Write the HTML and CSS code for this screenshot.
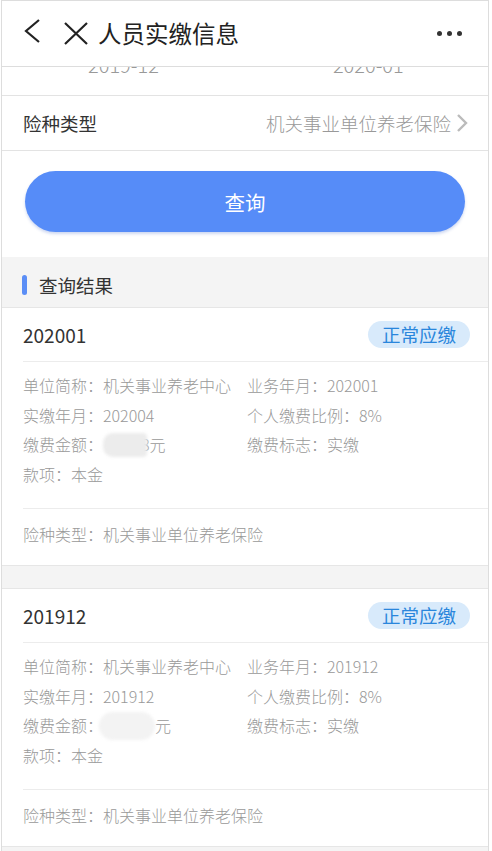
FILE: index.html
```html
<!DOCTYPE html>
<html>
<head>
    <meta charset="utf-8">
    <title>人员实缴信息</title>
    <link rel="stylesheet" href="styles.css">
</head>
<body>
    <div class="screen">
        <div class="nav">
            <svg class="nav-icon" width="30" height="30" viewBox="0 0 30 30">
                <path d="M16 2 L3 13 L16 24" fill="none" stroke="#222" stroke-width="2.2"/>
            </svg>
            <svg class="nav-icon close" width="26" height="26" viewBox="0 0 26 26">
                <path d="M2 2 L24 23 M24 2 L2 23" fill="none" stroke="#222" stroke-width="2.2"/>
            </svg>
            <span class="nav-title">人员实缴信息</span>
            <span class="nav-more"><i></i><i></i><i></i></span>
        </div>

        <div class="date-row">
            <div class="date-inner">
                <span class="date-from">2019-12</span>
                <span class="date-to">2020-01</span>
            </div>
        </div>

        <div class="field-row">
            <span class="field-label">险种类型</span>
            <span class="field-value">机关事业单位养老保险</span>
            <svg class="chevron" width="12" height="20" viewBox="0 0 12 20">
                <path d="M2 2 L10 10 L2 18" fill="none" stroke="#bbb" stroke-width="2.4"/>
            </svg>
        </div>

        <div class="btn-wrap">
            <button type="button" class="query-btn">查询</button>
        </div>

        <div class="section-head">
            <span class="bar"></span>
            <span>查询结果</span>
        </div>

        <div class="card">
            <div class="card-head">
                <span class="card-month">202001</span>
                <span class="badge">正常应缴</span>
            </div>
            <div class="card-body">
                <span>单位简称：机关事业养老中心</span>
                <span>业务年月：202001</span>
                <span>实缴年月：202004</span>
                <span>个人缴费比例：8%</span>
                <span>缴费金额：<i class="blur"></i>8元</span>
                <span>缴费标志：实缴</span>
                <span>款项：本金</span>
            </div>
            <div class="card-foot">险种类型：机关事业单位养老保险</div>
        </div>

        <div class="gap"></div>

        <div class="card">
            <div class="card-head">
                <span class="card-month">201912</span>
                <span class="badge">正常应缴</span>
            </div>
            <div class="card-body">
                <span>单位简称：机关事业养老中心</span>
                <span>业务年月：201912</span>
                <span>实缴年月：201912</span>
                <span>个人缴费比例：8%</span>
                <span>缴费金额：<i class="blur wide"></i>元</span>
                <span>缴费标志：实缴</span>
                <span>款项：本金</span>
            </div>
            <div class="card-foot">险种类型：机关事业单位养老保险</div>
        </div>

        <div class="gap"></div>
    </div>
</body>
</html>
```

FILE: styles.css
```css
body {
    margin: 0;
    padding: 0 0 0 1px;
    background-color: #fff;
    font-family: "Noto Sans CJK SC", "Noto Sans", sans-serif;
    overflow: hidden;
}

.screen {
    width: 486px;
    height: 851px;
    border-left: 1px solid #ddd;
    border-right: 1px solid #ddd;
    border-top: 1px solid #ddd;
    background-color: #fff;
    overflow: hidden;
}

.nav {
    display: flex;
    align-items: center;
    height: 65px;
    border-bottom: 1px solid #ddd;
    color: #222;
}

.nav-icon {
    margin-left: 21px;
    margin-top: -2px;
}

.nav-icon.close {
    margin-left: 10px;
    margin-top: 0;
}

.nav-title {
    margin-left: 9px;
    font-size: 23.5px;
    line-height: 30px;
    margin-top: -1px;
}

.nav-more {
    margin-left: auto;
    margin-right: 26px;
    display: flex;
    gap: 5px;
}

.nav-more i {
    width: 5px;
    height: 5px;
    border-radius: 50%;
    background-color: #333;
}

.date-row {
    height: 28px;
    overflow: hidden;
    border-bottom: 1px solid #e3e3e3;
}

.date-inner {
    display: flex;
    margin-top: -13px;
    font-size: 20px;
    line-height: 22px;
    font-weight: 300;
    color: #999;
}

.date-from {
    margin-left: 86px;
}

.date-to {
    margin-left: 174px;
}

.field-row {
    display: flex;
    align-items: center;
    height: 54px;
    padding: 0 20px 0 21px;
    border-bottom: 1px solid #e3e3e3;
}

.field-label {
    font-size: 18.5px;
    color: #333;
}

.field-value {
    margin-left: auto;
    font-size: 18.5px;
    font-weight: 300;
    color: #999;
}

.chevron {
    margin-left: 5px;
}

.btn-wrap {
    padding: 20px 23px 25px 23px;
}

.query-btn {
    display: block;
    width: 100%;
    height: 61px;
    border: none;
    border-radius: 31px;
    background-color: #568cf8;
    box-shadow: 0 2px 3px rgba(60, 100, 200, 0.25);
    color: #fff;
    font-family: inherit;
    font-size: 20.5px;
    cursor: pointer;
}

.section-head {
    display: flex;
    align-items: center;
    height: 44px;
    padding: 6px 0 0 20px;
    background-color: #f4f4f4;
    border-bottom: 1px solid #e6e6e6;
    font-size: 18.5px;
    color: #333;
}

.bar {
    width: 5px;
    height: 20px;
    border-radius: 3px;
    background-color: #5b8ef6;
    margin-right: 12px;
}

.card {
    background-color: #fff;
}

.card-head {
    display: flex;
    align-items: center;
    height: 53px;
    margin-left: 21px;
    padding-right: 18px;
    border-bottom: 1px solid #ececec;
}

.card-month {
    font-size: 19px;
    color: #333;
}

.badge {
    margin-left: auto;
    padding: 0 14px;
    height: 27px;
    line-height: 27px;
    border-radius: 14px;
    background-color: #d8eafb;
    color: #2a86dc;
    font-size: 18.5px;
}

.card-body {
    display: grid;
    grid-template-columns: 224px 1fr;
    margin-left: 21px;
    padding: 9px 0 18px 0;
    border-bottom: 1px solid #ececec;
    font-size: 16px;
    line-height: 29.7px;
    font-weight: 300;
    color: #999;
}

.blur {
    display: inline-block;
    vertical-align: top;
    width: 44px;
    height: 24px;
    margin-top: 3px;
    margin-right: -6px;
    background-color: #ececec;
    border-radius: 10px 4px 4px 10px;
    filter: blur(1.5px);
    position: relative;
}

.blur.wide {
    width: 56px;
    height: 28px;
    margin-top: 1px;
    margin-left: -4px;
    margin-right: 0;
    background-color: #f3f3f3;
    border-radius: 18px;
}

.card-foot {
    height: 50px;
    line-height: 50px;
    padding-left: 21px;
    padding-bottom: 6px;
    font-size: 16px;
    font-weight: 300;
    color: #999;
    border-bottom: 1px solid #e6e6e6;
}

.gap {
    height: 22px;
    background-color: #f4f4f4;
    border-bottom: 1px solid #e6e6e6;
}
```
